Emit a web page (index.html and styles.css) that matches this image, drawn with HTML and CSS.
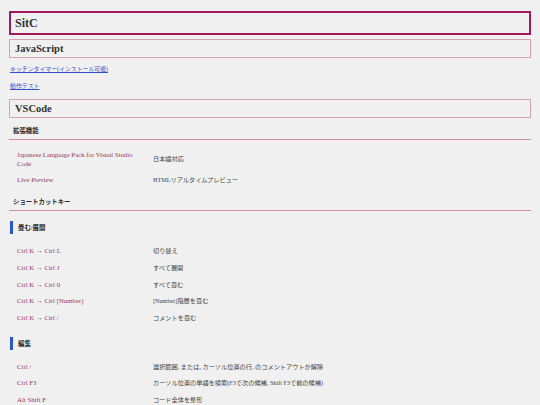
FILE: index.html
```html
<!DOCTYPE html>
<html lang="ja">
<head>
<meta charset="utf-8">
<title>SitC</title>
<link rel="stylesheet" href="styles.css">
</head>
<body>
<h1 class="site-title">SitC</h1>
<h2 class="section-title">JavaScript</h2>
<p class="link-line"><a href="#">キッチンタイマー(インストール可能)</a></p>
<p class="link-line"><a href="#">動作テスト</a></p>
<h2 class="section-title">VSCode</h2>
<h3 class="sub-title">拡張機能</h3>
<table class="kv">
  <tr><td class="key">Japanese Language Pack for Visual Studio Code</td><td class="val">日本語対応</td></tr>
  <tr><td class="key">Live Preview</td><td class="val">HTMLリアルタイムプレビュー</td></tr>
</table>
<h3 class="sub-title">ショートカットキー</h3>
<h4 class="group-title">畳む/展開</h4>
<table class="kv short">
  <tr><td class="key">Ctrl K → Ctrl L</td><td class="val">切り替え</td></tr>
  <tr><td class="key">Ctrl K → Ctrl J</td><td class="val">すべて展開</td></tr>
  <tr><td class="key">Ctrl K → Ctrl 0</td><td class="val">すべて畳む</td></tr>
  <tr><td class="key">Ctrl K → Ctrl [Number]</td><td class="val">[Number]階層を畳む</td></tr>
  <tr><td class="key">Ctrl K → Ctrl /</td><td class="val">コメントを畳む</td></tr>
</table>
<h4 class="group-title">編集</h4>
<table class="kv short">
  <tr><td class="key">Ctrl /</td><td class="val">選択範囲, または, カーソル位置の行, のコメントアウトか解除</td></tr>
  <tr><td class="key">Ctrl F3</td><td class="val">カーソル位置の単語を検索(F3で次の候補, Shift F3で前の候補)</td></tr>
  <tr><td class="key">Alt Shift F</td><td class="val">コード全体を整形</td></tr>
</table>
</body>
</html>
```

FILE: styles.css
```css
html {
  background: #f0f0f0;
}
body {
  margin: 11px 9px 0 9px;
  background: #f0f0f0;
  font-family: "Liberation Serif", "Noto Sans CJK JP", serif;
  color: #333;
  font-size: 6.5px;
}
.site-title {
  margin: 0;
  height: 20px;
  line-height: 20px;
  border: 2px solid #a3195b;
  padding: 0 0 0 4px;
  font-size: 12px;
  font-weight: bold;
  color: #333;
}
.section-title {
  margin: 4px 0 0 0;
  height: 17px;
  line-height: 17px;
  border: 1px solid #d9a1b6;
  padding: 0 0 0 5px;
  font-size: 10.5px;
  font-weight: bold;
  color: #333;
}
.link-line {
  margin: 0;
  height: 17px;
  line-height: 17px;
  padding-left: 1px;
  font-size: 5.9px;
}
.link-line:first-of-type {
  margin-top: 3px;
}
.link-line a {
  color: #3550cc;
  text-decoration: underline;
}
.sub-title {
  margin: 0;
  padding: 8px 0 3px 4px;
  line-height: 10px;
  font-size: 6.4px;
  font-weight: bold;
  color: #2a2a2a;
  border-bottom: 1px solid #d18ca6;
}
.kv {
  border-collapse: collapse;
  margin-top: 7px;
  table-layout: fixed;
}
.kv td {
  padding: 4px 8px;
  line-height: 8.7px;
  vertical-align: middle;
  font-weight: normal;
}
.kv .key {
  width: 120px;
  color: #9c3556;
  font-size: 6.8px;
}
.kv .val {
  color: #444;
  font-size: 6.2px;
}
.group-title {
  margin: 10px 0 0 1px;
  border-left: 3px solid #2a56d0;
  padding-left: 5px;
  line-height: 13px;
  font-size: 6.4px;
  font-weight: bold;
  color: #2a2a2a;
}
.short {
  margin-top: 9px;
}
```
